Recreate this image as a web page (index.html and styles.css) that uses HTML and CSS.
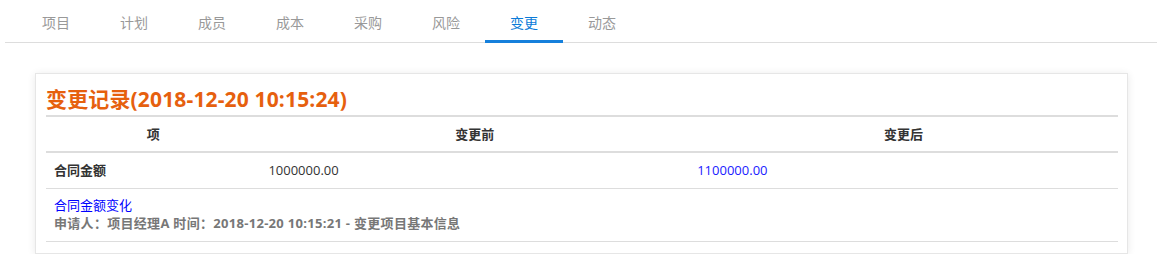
FILE: index.html
```html
<!DOCTYPE html>
<html lang="zh-CN">
<head>
    <meta charset="UTF-8">
    <meta name="viewport" content="width=device-width, initial-scale=1.0">
    <title>变更记录</title>
    <link rel="stylesheet" href="styles.css">
</head>
<body>

    <nav class="tabs">
        <a class="tab" href="#">项目</a>
        <a class="tab" href="#">计划</a>
        <a class="tab" href="#">成员</a>
        <a class="tab" href="#">成本</a>
        <a class="tab" href="#">采购</a>
        <a class="tab" href="#">风险</a>
        <a class="tab active" href="#">变更</a>
        <a class="tab" href="#">动态</a>
    </nav>

    <main class="card">
        <h2 class="card-title">变更记录(2018-12-20 10:15:24)</h2>
        <table class="change-table">
            <thead>
                <tr>
                    <th class="col-item">项</th>
                    <th class="col-val">变更前</th>
                    <th class="col-val">变更后</th>
                </tr>
            </thead>
            <tbody>
                <tr>
                    <td class="item-name">合同金额</td>
                    <td>1000000.00</td>
                    <td class="new-value">1100000.00</td>
                </tr>
                <tr>
                    <td colspan="3" class="info">
                        <a href="#" class="info-link">合同金额变化</a>
                        <div class="info-meta">申请人：项目经理A 时间：2018-12-20 10:15:21 - 变更项目基本信息</div>
                    </td>
                </tr>
            </tbody>
        </table>
    </main>

</body>
</html>
```

FILE: styles.css
```css
* {
    margin: 0;
    padding: 0;
    box-sizing: border-box;
}

body {
    font-family: "Open Sans", "Noto Sans CJK SC", sans-serif;
    font-size: 13px;
    color: #333;
    background-color: #fff;
}

.tabs {
    display: flex;
    margin-left: 5px;
    padding-left: 12px;
    border-bottom: 1px solid #ddd;
}

.tab {
    width: 78px;
    padding: 14px 0 8px;
    line-height: 18px;
    text-align: center;
    font-size: 14px;
    color: #999;
    text-decoration: none;
    border-bottom: 3px solid transparent;
    margin-bottom: -1px;
}

.tab.active {
    color: #0a7bd8;
    border-bottom-color: #1580dc;
}

.card {
    margin: 30px 29px 0 35px;
    padding: 11px 9px 11px 10px;
    border: 1px solid #e6e6e6;
    box-shadow: 0 1px 8px rgba(0, 0, 0, 0.09);
    background-color: #fff;
}

.card-title {
    font-size: 21px;
    line-height: 28px;
    letter-spacing: 0.15px;
    font-weight: bold;
    color: #e6600e;
    margin-bottom: 2px;
}

.change-table {
    width: 100%;
    border-collapse: collapse;
    border-top: 2px solid #ddd;
}

.change-table th {
    padding: 7px 8px;
    line-height: 20px;
    font-size: 13px;
    font-weight: bold;
    color: #333;
    border-bottom: 2px solid #ddd;
}

.col-item {
    width: 20%;
}

.col-val {
    width: 40%;
}

.change-table td {
    padding: 8px;
    line-height: 19px;
    text-align: left;
    border-bottom: 1px solid #ddd;
}

.item-name {
    font-weight: bold;
}

.new-value {
    color: #2020ff;
}

.change-table td.info {
    padding: 7px 8px 9px;
    line-height: 18px;
}

.info-link {
    color: #0000ff;
    text-decoration: none;
}

.info-meta {
    color: #777;
    font-weight: bold;
    letter-spacing: 0.3px;
}
```
